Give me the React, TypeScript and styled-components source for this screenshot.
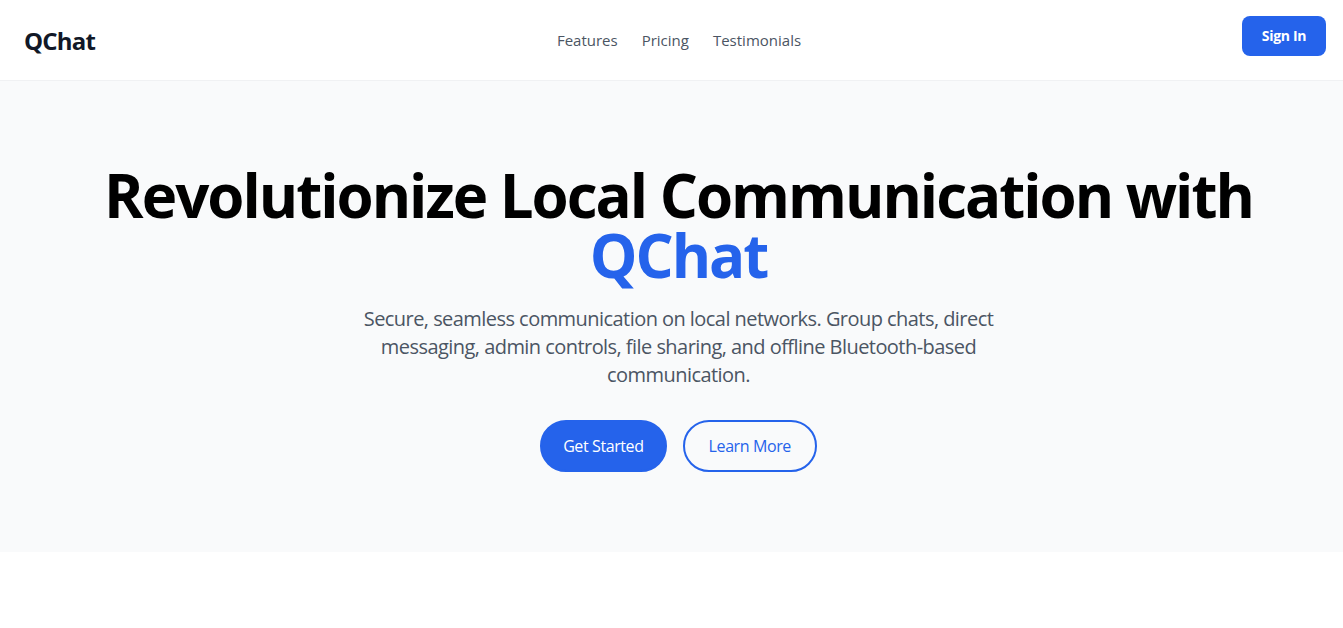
import styled, { createGlobalStyle } from 'styled-components';

const GlobalStyle = createGlobalStyle`
  * {
    box-sizing: border-box;
  }
  body {
    margin: 0;
    background: #ffffff;
    font-family: "Open Sans", "Noto Sans", "Liberation Sans", sans-serif;
  }
`;

const App = () => {
  return (
    <>
      <GlobalStyle />
      <Header>
        <Logo>QChat</Logo>
        <Nav>
          <NavLink href="#features">Features</NavLink>
          <NavLink href="#pricing">Pricing</NavLink>
          <NavLink href="#testimonials">Testimonials</NavLink>
        </Nav>
        <SignInButton>Sign In</SignInButton>
      </Header>

      <Hero>
        <Title>
          Revolutionize Local Communication with <Accent>QChat</Accent>
        </Title>
        <Lead>
          Secure, seamless communication on local networks. Group chats, direct messaging, admin
          controls, file sharing, and offline Bluetooth-based communication.
        </Lead>
        <Actions>
          <PillButton>Get Started</PillButton>
          <PillButton outline>Learn More</PillButton>
        </Actions>
      </Hero>
    </>
  );
};

export default App;

// top bar
const Header = styled.header`
  height: 81px;
  display: grid;
  grid-template-columns: 1fr auto 1fr;
  align-items: center;
  padding: 0 17px 0 24px;
  background: #ffffff;
  border-bottom: 1px solid #f0f1f3;
  box-shadow: 0 1px 2px rgba(0, 0, 0, 0.03);
`;

const Logo = styled.div`
  font-size: 24px;
  font-weight: 700;
  color: #111827;
  letter-spacing: -0.8px;
`;

const Nav = styled.nav`
  display: flex;
  gap: 24px;
  margin-left: 8px;
`;

const NavLink = styled.a`
  font-size: 15px;
  color: #4b5563;
  text-decoration: none;
`;

const SignInButton = styled.button`
  justify-self: end;
  width: 84px;
  height: 40px;
  margin-top: -9px;
  border: none;
  border-radius: 8px;
  background: #2563eb;
  color: #ffffff;
  font-family: inherit;
  font-size: 14px;
  font-weight: 700;
  letter-spacing: -0.3px;
  cursor: pointer;
`;

// hero block
const Hero = styled.section`
  background: #f9fafb;
  padding: 84px 24px 80px 38px;
  display: flex;
  flex-direction: column;
  align-items: center;
  text-align: center;
`;

const Title = styled.h1`
  margin: 0 0 20px;
  font-size: 60px;
  line-height: 60px;
  font-weight: 700;
  letter-spacing: -2px;
  color: #000000;
`;

const Accent = styled.span`
  color: #2563eb;
`;

const Lead = styled.p`
  margin: 0 0 31px;
  max-width: 672px;
  font-size: 20px;
  line-height: 28px;
  letter-spacing: -0.55px;
  color: #4b5563;
`;

const Actions = styled.div`
  display: flex;
  gap: 16px;
`;

const PillButton = styled.button<{ outline?: boolean }>`
  height: 52px;
  padding: 0 ${({ outline }) => (outline ? '24px' : '21px')};
  border-radius: 9999px;
  border: 2px solid #2563eb;
  background: ${({ outline }) => (outline ? 'transparent' : '#2563eb')};
  color: ${({ outline }) => (outline ? '#2563eb' : '#ffffff')};
  font-family: inherit;
  font-size: 16px;
  letter-spacing: -0.4px;
  cursor: pointer;
`;
